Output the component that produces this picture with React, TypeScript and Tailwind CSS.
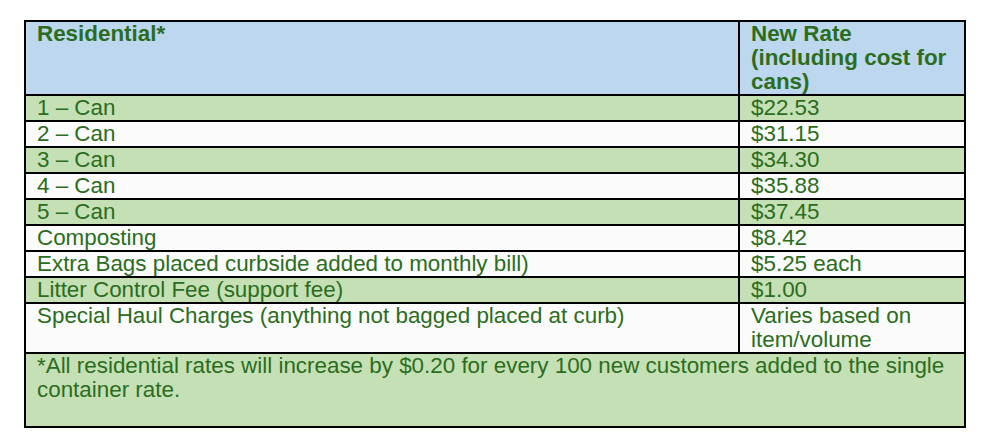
const rows: { label: string; rate: string; green: boolean }[] = [
  { label: '1 – Can', rate: '$22.53', green: true },
  { label: '2 – Can', rate: '$31.15', green: false },
  { label: '3 – Can', rate: '$34.30', green: true },
  { label: '4 – Can', rate: '$35.88', green: false },
  { label: '5 – Can', rate: '$37.45', green: true },
  { label: 'Composting', rate: '$8.42', green: false },
  { label: 'Extra Bags placed curbside added to monthly bill)', rate: '$5.25 each', green: false },
  { label: 'Litter Control Fee (support fee)', rate: '$1.00', green: true },
  { label: 'Special Haul Charges (anything not bagged placed at curb)', rate: 'Varies based on item/volume', green: false },
];

export default function App() {
  return (
    <div className="min-h-screen bg-white pt-[20px] pl-[24px] font-['Liberation_Sans',Arial,sans-serif] text-[22.4px] leading-[24px] text-[#2a6d20]">
      <table className="w-[942px] border-collapse border-2 border-black">
        <thead>
          <tr className="bg-[#bdd7ee] align-top">
            <th className="w-[714px] border-2 border-black px-[11px] text-left font-bold">Residential*</th>
            <th className="border-2 border-black pl-[11px] pr-[8px] text-left font-bold">
              New Rate
              <br />
              (including cost for cans)
            </th>
          </tr>
        </thead>
        <tbody>
          {rows.map((r) => (
            <tr key={r.label} className={`align-top ${r.green ? 'bg-[#c5e0b4]' : 'bg-[#fbfbfb]'}`}>
              <td className="border-2 border-black px-[11px]">{r.label}</td>
              <td className="border-2 border-black pl-[11px] pr-[8px]">{r.rate}</td>
            </tr>
          ))}
          <tr className="bg-[#c5e0b4] align-top">
            <td colSpan={2} className="h-[74px] border-2 border-black px-[11px]">
              *All residential rates will increase by $0.20 for every 100 new customers added to the single container rate.
            </td>
          </tr>
        </tbody>
      </table>
    </div>
  );
}
